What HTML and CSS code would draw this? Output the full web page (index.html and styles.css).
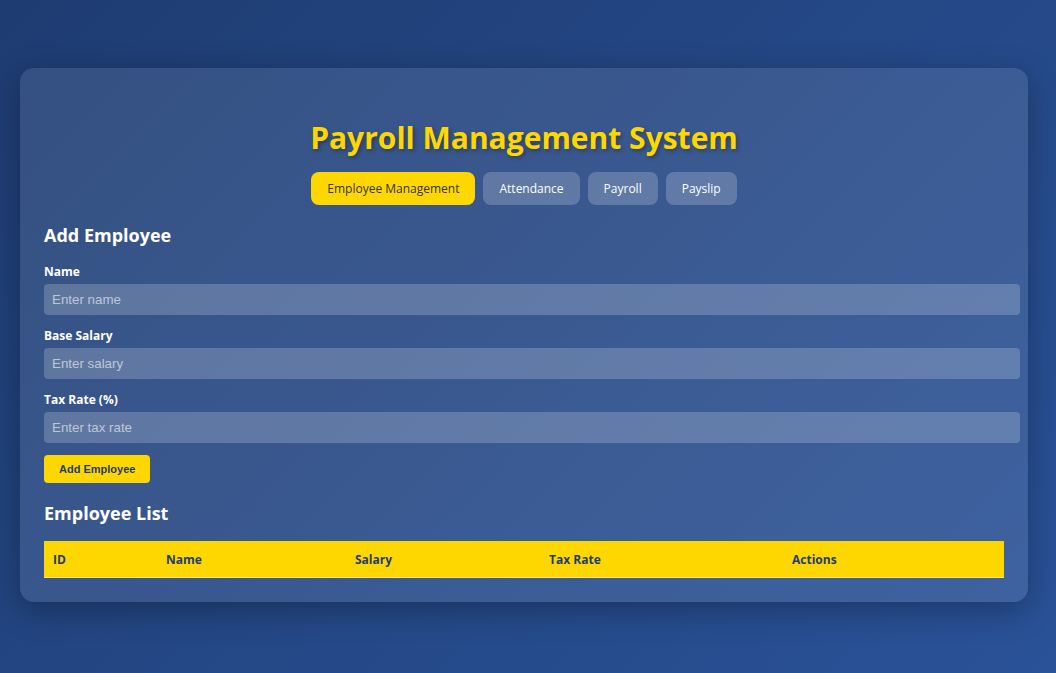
FILE: index.html
```html
<!DOCTYPE html>
<html lang="en">
<head>
<meta charset="UTF-8">
<title>Payroll Management System</title>
<link rel="stylesheet" href="styles.css">
</head>
<body>
<div class="container">
  <header class="header">
    <h1 class="title">Payroll Management System</h1>
    <nav class="tabs">
      <button class="tab active">Employee Management</button>
      <button class="tab">Attendance</button>
      <button class="tab">Payroll</button>
      <button class="tab">Payslip</button>
    </nav>
  </header>

  <section class="section">
    <h2 class="section-title">Add Employee</h2>
    <div class="form-group">
      <label class="label">Name</label>
      <input class="input" type="text" placeholder="Enter name">
    </div>
    <div class="form-group">
      <label class="label">Base Salary</label>
      <input class="input" type="text" placeholder="Enter salary">
    </div>
    <div class="form-group">
      <label class="label">Tax Rate (%)</label>
      <input class="input" type="text" placeholder="Enter tax rate">
    </div>
    <button class="btn-primary">Add Employee</button>
  </section>

  <section class="section list">
    <h2 class="section-title">Employee List</h2>
    <table class="table">
      <thead>
        <tr>
          <th class="col-id">ID</th>
          <th class="col-name">Name</th>
          <th class="col-salary">Salary</th>
          <th class="col-tax">Tax Rate</th>
          <th class="col-actions">Actions</th>
        </tr>
      </thead>
      <tbody></tbody>
    </table>
  </section>
</div>
</body>
</html>
```

FILE: styles.css
```css
html, body {
  margin: 0;
  padding: 0;
}

body {
  min-height: 673px;
  font-family: "Open Sans", "Noto Sans", sans-serif;
  color: #ffffff;
  background: linear-gradient(135deg, #1e3c72 0%, #2a5298 100%);
  padding: 68px 28px 40px 20px;
  box-sizing: border-box;
}

.container {
  background: rgba(255, 255, 255, 0.1);
  border-radius: 14px;
  padding: 24px;
  box-shadow: 0 8px 32px rgba(0, 0, 0, 0.3);
}

.header {
  text-align: center;
}

.title {
  margin: 25px 0 14px;
  font-size: 30px;
  font-weight: 700;
  color: #ffd700;
  text-shadow: 2px 2px 4px rgba(0, 0, 0, 0.3);
}

.tabs {
  display: flex;
  justify-content: center;
  gap: 8px;
}

.tab {
  font-family: inherit;
  font-size: 12px;
  padding: 8px 16px;
  border: none;
  border-radius: 8px;
  background: rgba(255, 255, 255, 0.2);
  color: #ffffff;
  line-height: 17px;
}

.tab.active {
  background: #ffd700;
  color: #333333;
}

.section-title {
  margin: 18px 0 16px;
  font-size: 18px;
  font-weight: 700;
  color: #ffffff;
}

.form-group {
  margin-bottom: 12px;
}

.label {
  display: block;
  font-size: 12px;
  line-height: 18px;
  font-weight: 700;
  margin-bottom: 3px;
}

.input {
  display: block;
  width: 100%;
  padding: 8px;
  border: none;
  border-radius: 4px;
  background: rgba(255, 255, 255, 0.2);
  color: #ffffff;
  font-family: "Liberation Sans", Arial, sans-serif;
  font-size: 13.33px;
  line-height: 15px;
}

.input::placeholder {
  color: rgba(255, 255, 255, 0.6);
}

.btn-primary {
  font-family: "Liberation Sans", Arial, sans-serif;
  font-size: 11px;
  font-weight: 700;
  line-height: 12px;
  padding: 8px 15px;
  border: none;
  border-radius: 4px;
  background: #ffd700;
  color: #1e3c72;
}

.list .section-title {
  margin-top: 18px;
  margin-bottom: 16px;
}

.table {
  width: 100%;
  border-collapse: collapse;
}

.table th {
  box-sizing: border-box;
  background: #ffd700;
  color: #1e3c72;
  font-size: 12px;
  font-weight: 700;
  text-align: left;
  padding: 10px 9px 9px;
  line-height: 17px;
  border-bottom: 1px solid rgba(255, 255, 255, 0.4);
}

.col-id { width: 113px; }
.col-name { width: 189px; }
.col-salary { width: 194px; }
.col-tax { width: 243px; }
.col-actions { width: 221px; }
```
